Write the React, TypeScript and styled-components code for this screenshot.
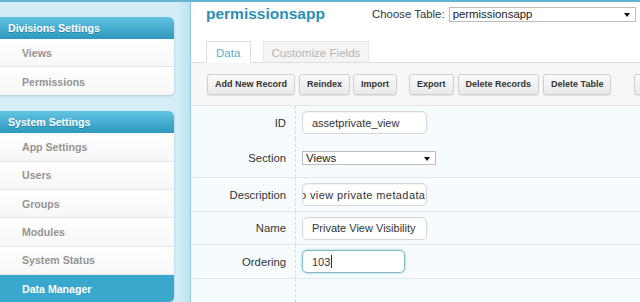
import styled, { createGlobalStyle } from 'styled-components';

const GlobalStyle = createGlobalStyle`
  html, body { margin: 0; padding: 0; }
  body {
    font-family: "Liberation Sans", Arial, sans-serif;
    background: #d4eef6;
    overflow: hidden;
  }
`;

const Page = styled.div`
  display: flex;
  width: 640px;
  height: 302px;
  box-sizing: border-box;
  border-top: 2px solid #62b4d0;
  overflow: hidden;
`;

const Sidebar = styled.div`
  width: 190px;
  flex-shrink: 0;
  padding-top: 15px;
  box-sizing: border-box;
  background: linear-gradient(to right, #d5eef6 0, #d5eef6 176px, #cbe9f2 182px, #c0e2ed 189px);
  display: flex;
  flex-direction: column;
  gap: 16px;
`;

const Panel = styled.div`
  width: 174px;
  border-radius: 0 5px 5px 0;
  background: #fff;
  box-shadow: 0 1px 3px rgba(0, 60, 90, 0.2);
  overflow: hidden;
`;

const PanelHeader = styled.div`
  height: 22px;
  padding-left: 8px;
  display: flex;
  align-items: center;
  background: linear-gradient(to bottom, #62c4e2, #2e98be);
  color: #fff;
  font-weight: bold;
  font-size: 10.6px;
  text-shadow: 0 1px 0 rgba(0, 60, 90, 0.35);
  border-radius: 0 5px 0 0;
`;

const NavItem = styled.div<{ $active?: boolean }>`
  height: 28.4px;
  box-sizing: border-box;
  padding-left: 22px;
  display: flex;
  align-items: center;
  font-weight: bold;
  font-size: 10.6px;
  color: ${p => (p.$active ? '#fff' : '#939393')};
  background: ${p => (p.$active ? '#3aa7cd' : 'linear-gradient(to bottom, #ffffff, #f7f7f7)')};
  border-bottom: 1px solid ${p => (p.$active ? '#3aa7cd' : '#e6e6e6')};
  text-shadow: ${p => (p.$active ? 'none' : '0 1px 0 #fff')};
  &:last-child { border-bottom: none; }
`;

const Main = styled.div`
  flex: 1;
  min-width: 0;
  background: #fff;
  border-left: 1px solid #8dcadf;
  display: flex;
  flex-direction: column;
`;

const TitleRow = styled.div`
  height: 24px;
  display: flex;
  align-items: center;
  padding: 0 4px 0 15px;
`;

const Title = styled.div`
  width: 166px;
  flex-shrink: 0;
  font-size: 15.5px;
  font-weight: bold;
  color: #2b8fb4;
`;

const ChooseLabel = styled.span`
  font-size: 11.4px;
  color: #333;
  margin-right: 4px;
  white-space: nowrap;
`;

const SelectBox = styled.div<{ $width: number; $height: number }>`
  position: relative;
  width: ${p => p.$width}px;
  height: ${p => p.$height}px;
  box-sizing: border-box;
  border: 1px solid #bcbcbc;
  background: #fff;
  font-size: 11.4px;
  color: #222;
  padding-left: 3px;
  display: flex;
  align-items: center;
  white-space: nowrap;
`;

const Caret = styled.span`
  position: absolute;
  right: 5px;
  top: 50%;
  margin-top: -1px;
  width: 0;
  height: 0;
  border-left: 3.5px solid transparent;
  border-right: 3.5px solid transparent;
  border-top: 4px solid #111;
`;

const Tabs = styled.div`
  margin-top: 14px;
  height: 22px;
  display: flex;
  align-items: flex-end;
  gap: 12px;
  padding-left: 15px;
  border-bottom: 1px solid #dedede;
`;

const Tab = styled.div<{ $active?: boolean }>`
  height: 22px;
  box-sizing: border-box;
  padding: 0 ${p => (p.$active ? '9px' : '8px')};
  margin-bottom: -1px;
  display: flex;
  align-items: center;
  font-size: 11.6px;
  color: ${p => (p.$active ? '#5aaecd' : '#b6b6b6')};
  background: ${p => (p.$active ? '#fff' : '#f4f4f4')};
  border: 1px solid ${p => (p.$active ? '#dcdcdc' : '#e8e8e8')};
  border-bottom-color: ${p => (p.$active ? '#fff' : '#dedede')};
`;

const Toolbar = styled.div`
  height: 42px;
  flex-shrink: 0;
  display: flex;
  align-items: center;
  padding-left: 16px;
  background: #f7f7f7;
  border-bottom: 1px solid #e6e6e6;
`;

const ToolButton = styled.div<{ $gap?: number; $width?: number }>`
  height: 21px;
  box-sizing: border-box;
  margin-left: ${p => p.$gap ?? 0}px;
  padding: 0 7px;
  min-width: ${p => p.$width ?? 0}px;
  display: flex;
  align-items: center;
  flex-shrink: 0;
  font-size: 9px;
  font-weight: bold;
  color: #333;
  white-space: nowrap;
  border: 1px solid #cfcfcf;
  border-radius: 3px;
  background: linear-gradient(to bottom, #fbfbfb, #e9e9e9);
  box-shadow: 0 1px 1px rgba(0, 0, 0, 0.08);
`;

const Form = styled.div`
  flex: 1;
  display: flex;
  flex-direction: column;
  background: #f6fcfe;
`;

const Row = styled.div<{ $height?: number; $line?: boolean; $fill?: boolean }>`
  display: flex;
  height: ${p => (p.$fill ? 'auto' : `${p.$height}px`)};
  flex: ${p => (p.$fill ? 1 : 'none')};
  box-sizing: border-box;
  border-bottom: ${p => (p.$line ? '1px solid #e3e8ea' : 'none')};
`;

const LabelCell = styled.div`
  width: 105px;
  box-sizing: border-box;
  padding-right: 9px;
  border-right: 1px dashed #d8dcdd;
  display: flex;
  align-items: center;
  justify-content: flex-end;
  font-size: 11.3px;
  color: #333;
`;

const FieldCell = styled.div`
  padding-left: 6px;
  display: flex;
  align-items: center;
`;

const TextBox = styled.div<{ $width: number; $focused?: boolean; $inset?: number }>`
  width: ${p => p.$width}px;
  height: 23px;
  box-sizing: border-box;
  padding-left: ${p => p.$inset ?? 9}px;
  display: flex;
  align-items: center;
  overflow: hidden;
  white-space: nowrap;
  font-size: 11px;
  color: #333;
  background: #fff;
  border: 1px solid ${p => (p.$focused ? '#80b9c6' : '#d6d6d6')};
  border-radius: 5px;
  box-shadow: ${p =>
    p.$focused ? '0 0 3px rgba(90, 160, 185, 0.55)' : 'inset 0 1px 1px rgba(0, 0, 0, 0.04)'};
`;

const Scrolled = styled.span`
  margin-left: -3px;
  letter-spacing: 0.4px;
`;

const TextCursor = styled.span`
  display: inline-block;
  width: 1px;
  height: 13px;
  background: #333;
  margin-left: 1px;
`;

export default function App() {
  return (
    <>
      <GlobalStyle />
      <Page>
        <Sidebar>
          <Panel>
            <PanelHeader>Divisions Settings</PanelHeader>
            <NavItem>Views</NavItem>
            <NavItem>Permissions</NavItem>
          </Panel>
          <Panel>
            <PanelHeader>System Settings</PanelHeader>
            <NavItem>App Settings</NavItem>
            <NavItem>Users</NavItem>
            <NavItem>Groups</NavItem>
            <NavItem>Modules</NavItem>
            <NavItem>System Status</NavItem>
            <NavItem $active>Data Manager</NavItem>
          </Panel>
        </Sidebar>

        <Main>
          <TitleRow>
            <Title>permissionsapp</Title>
            <ChooseLabel>Choose Table:</ChooseLabel>
            <SelectBox $width={189} $height={15}>
              permissionsapp
              <Caret />
            </SelectBox>
          </TitleRow>

          <Tabs>
            <Tab $active>Data</Tab>
            <Tab>Customize Fields</Tab>
          </Tabs>

          <Toolbar>
            <ToolButton>Add New Record</ToolButton>
            <ToolButton $gap={4}>Reindex</ToolButton>
            <ToolButton $gap={3}>Import</ToolButton>
            <ToolButton $gap={12}>Export</ToolButton>
            <ToolButton $gap={4}>Delete Records</ToolButton>
            <ToolButton $gap={4}>Delete Table</ToolButton>
            <ToolButton $gap={23} $width={40} />
          </Toolbar>

          <Form>
            <Row $height={33}>
              <LabelCell>ID</LabelCell>
              <FieldCell>
                <TextBox $width={125}>assetprivate_view</TextBox>
              </FieldCell>
            </Row>
            <Row $height={39} $line>
              <LabelCell>Section</LabelCell>
              <FieldCell>
                <SelectBox $width={134} $height={14}>
                  Views
                  <Caret />
                </SelectBox>
              </FieldCell>
            </Row>
            <Row $height={34} $line>
              <LabelCell>Description</LabelCell>
              <FieldCell>
                <TextBox $width={125} $inset={0}>
                  <Scrolled>o view private metadata</Scrolled>
                </TextBox>
              </FieldCell>
            </Row>
            <Row $height={33} $line>
              <LabelCell>Name</LabelCell>
              <FieldCell>
                <TextBox $width={125}>Private View Visibility</TextBox>
              </FieldCell>
            </Row>
            <Row $height={34} $line>
              <LabelCell>Ordering</LabelCell>
              <FieldCell>
                <TextBox $width={103} $focused>
                  103
                  <TextCursor />
                </TextBox>
              </FieldCell>
            </Row>
            <Row $fill>
              <LabelCell />
            </Row>
          </Form>
        </Main>
      </Page>
    </>
  );
}
